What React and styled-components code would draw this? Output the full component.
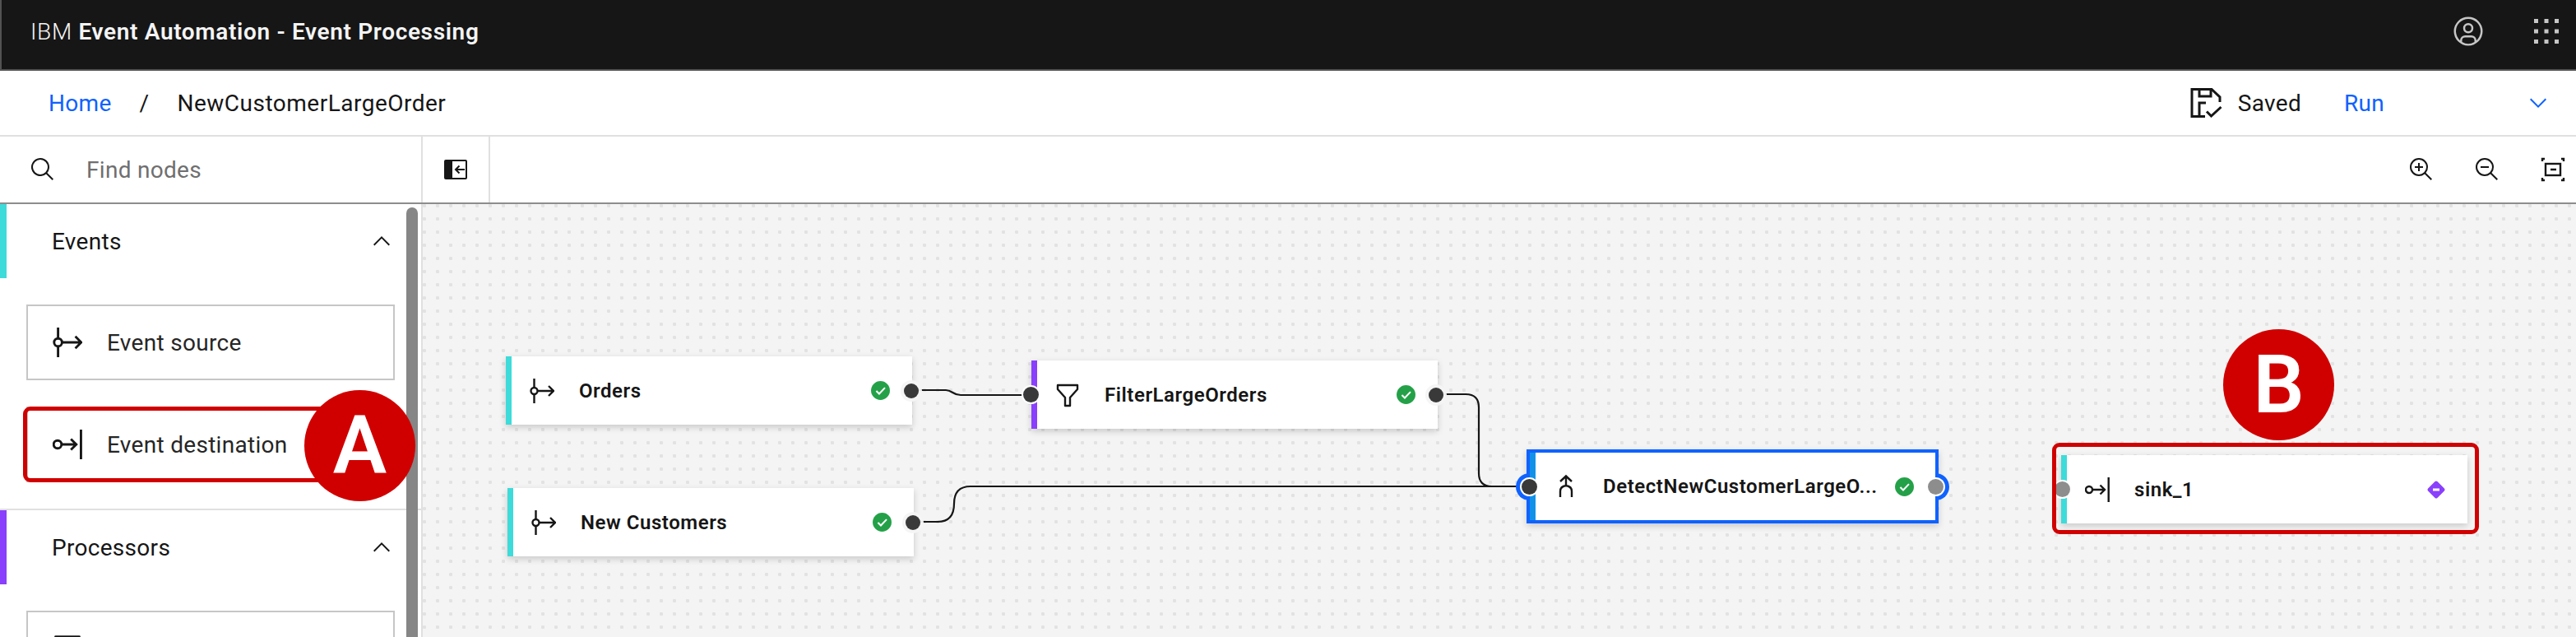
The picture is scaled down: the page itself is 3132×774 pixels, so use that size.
import React from "react";
import styled, { createGlobalStyle } from "styled-components";

const GlobalStyle = createGlobalStyle`
    * { box-sizing: border-box; }
    html, body { margin: 0; padding: 0; background: #fff; }
    body {
        font-family: Roboto, "Liberation Sans", sans-serif;
        color: #161616;
        overflow: hidden;
    }
`;

const Page = styled.div`
    position: relative;
    width: 3132px;
    height: 774px;
    display: flex;
    flex-direction: column;
    overflow: hidden;
`;

const Header = styled.header`
    flex: 0 0 86px;
    display: flex;
    align-items: center;
    justify-content: space-between;
    padding: 0 21px 8px 35px;
    background: #161616;
    border-left: 2px solid #525252;
    border-bottom: 2px solid #525252;
    color: #f4f4f4;
`;

const Title = styled.div`
    font-size: 28px;
    font-weight: 600;
    letter-spacing: 0.65px;
    span { font-weight: 300; }
`;

const HeaderIcons = styled.div`
    display: flex;
    align-items: center;
    gap: 60px;
    color: #c6c6c6;
`;

const BreadcrumbBar = styled.nav`
    flex: 0 0 80px;
    display: flex;
    align-items: center;
    justify-content: space-between;
    padding: 0 30px 0 59px;
    border-bottom: 2px solid #e0e0e0;
    font-size: 28px;
    letter-spacing: 0.3px;
`;

const Crumbs = styled.div`
    display: flex;
    align-items: center;
`;

const HomeLink = styled.a`
    color: #0f62fe;
`;

const Slash = styled.span`
    margin: 0 34px;
`;

const FlowName = styled.span`
    letter-spacing: 0.5px;
`;

const SaveState = styled.div`
    display: flex;
    align-items: center;
    gap: 19px;
`;

const RunButton = styled.div`
    display: flex;
    align-items: center;
    justify-content: space-between;
    width: 252px;
    margin-left: 52px;
    color: #0f62fe;
`;

const RightGroup = styled.div`
    display: flex;
    align-items: center;
`;

const Toolbar = styled.div`
    flex: 0 0 82px;
    display: flex;
    align-items: center;
    border-bottom: 2px solid #8d8d8d;
`;

const SearchBox = styled.div`
    width: 514px;
    height: 100%;
    display: flex;
    align-items: center;
    gap: 37px;
    padding-left: 36px;
    border-right: 2px solid #e0e0e0;
    font-size: 28px;
    letter-spacing: 0.3px;
    color: #6f6f6f;
    svg { color: #161616; }
`;

const ToolCell = styled.div`
    width: 82px;
    height: 100%;
    display: flex;
    align-items: center;
    justify-content: center;
    border-right: 2px solid #e0e0e0;
`;

const ZoomTools = styled.div`
    margin-left: auto;
    display: flex;
    align-items: center;
    gap: 48px;
    padding-right: 12px;
`;

const Body = styled.div`
    flex: 1;
    display: flex;
    min-height: 0;
`;

const Sidebar = styled.aside`
    position: relative;
    flex: 0 0 514px;
    border-right: 2px solid #e0e0e0;
    overflow: hidden;
`;

const Thumb = styled.div`
    position: absolute;
    top: 4px;
    bottom: -20px;
    left: 494px;
    width: 14px;
    border-radius: 7px;
    background: #868686;
`;

const Section = styled.section`
    border-bottom: 2px solid #e0e0e0;
    &:last-of-type { border-bottom: none; }
`;

const SectionHeader = styled.div`
    height: 90px;
    display: flex;
    align-items: center;
    justify-content: space-between;
    padding: 0 32px 0 55px;
    border-left: 8px solid ${(p) => p.$color};
    font-size: 28px;
    letter-spacing: 0.3px;
`;

const CardList = styled.div`
    display: flex;
    flex-direction: column;
    gap: 32px;
    padding: 32px;
`;

const Card = styled.div`
    height: 92px;
    display: flex;
    align-items: center;
    gap: 30px;
    padding-left: 30px;
    border: 2px solid #c6c6c6;
    background: #fff;
    font-size: 28px;
    letter-spacing: 0.3px;
    color: #262626;
`;

const Canvas = styled.main`
    position: relative;
    flex: 1;
    overflow: hidden;
    background-color: #f4f4f4;
    background-image: radial-gradient(circle at 8px 8px, #e2e2e2 2px, transparent 2.4px);
    background-size: 16px 16px;
    background-position: 10px 10px;
`;

const Wires = styled.svg`
    position: absolute;
    inset: 0;
    width: 100%;
    height: 100%;
`;

const Node = styled.div`
    position: absolute;
    isolation: isolate;
    left: ${(p) => p.$x}px;
    top: ${(p) => p.$y}px;
    width: ${(p) => (p.$selected ? 501 : 494)}px;
    height: ${(p) => (p.$selected ? 90 : 83)}px;
    display: flex;
    align-items: center;
    padding: 0 ${(p) => (p.$selected ? 24 : 25)}px 0 29px;
    background: #fff;
    border: ${(p) => (p.$selected ? "4px solid #0f62fe" : "none")};
    box-shadow: 0 3px 8px rgba(0, 0, 0, 0.18);
    &::before {
        content: "";
        position: absolute;
        left: 0;
        top: 0;
        bottom: 0;
        width: 7px;
        background: ${(p) => p.$color};
    }
`;

const NodeIcon = styled.div`
    flex: 0 0 60px;
    display: flex;
    align-items: center;
`;

const NodeLabel = styled.div`
    flex: 1;
    font-size: 24px;
    font-weight: 600;
    letter-spacing: 0.55px;
    white-space: nowrap;
    color: #161616;
`;

const Port = styled.span`
    position: absolute;
    top: 50%;
    width: ${(p) => (p.$thin ? 19 : 18)}px;
    height: ${(p) => (p.$thin ? 19 : 18)}px;
    margin-top: ${(p) => (p.$thin ? -9.5 : -9)}px;
    border-radius: 50%;
    background: ${(p) => (p.$idle ? "#8d8d8d" : "#393939")};
    box-shadow: 0 0 0 ${(p) => (p.$thin ? "2px #fff" : "4px rgba(244, 244, 244, 0.95)")};
    ${(p) => (p.$side === "in" ? `left: ${p.$at}px;` : `right: ${p.$at}px;`)}
    &::before {
        content: ${(p) => (p.$bump ? '""' : "none")};
        position: absolute;
        inset: -7px;
        z-index: -1;
        border-radius: 50%;
        background: #0f62fe;
        clip-path: ${(p) => (p.$side === "in" ? "inset(0 60% 0 0)" : "inset(0 0 0 60%)")};
    }
`;

const Highlight = styled.div`
    position: absolute;
    left: ${(p) => p.$x}px;
    top: ${(p) => p.$y}px;
    width: ${(p) => p.$w}px;
    height: ${(p) => p.$h}px;
    border: 5px solid #d00000;
    border-radius: 9px;
`;

const Badge = styled.div`
    position: absolute;
    left: ${(p) => p.$x}px;
    top: ${(p) => p.$y}px;
    width: 135px;
    height: 135px;
    display: flex;
    align-items: center;
    justify-content: center;
    border-radius: 50%;
    background: #d00000;
    color: #fff;
    font-size: 98px;
    font-weight: 600;
    line-height: 1;
`;

const Icon = ({ size = 32, view = "0 0 32 32", children, ...rest }) => (
    <svg width={size} height={size} viewBox={view} fill="currentColor" {...rest}>
        {children}
    </svg>
);

const Line = styled.svg`
    fill: none;
    stroke: #161616;
    stroke-width: ${(p) => p.$weight || 2.4};
    flex-shrink: 0;
`;

const SourceIcon = ({ size = 30 }) => (
    <Line width={size} height={size} viewBox="0 0 30 30">
        <path d="M5.5 0V11M5.5 19V30M9.5 15H29M23 9l6 6-6 6" />
        <circle cx="5.5" cy="15" r="4" />
    </Line>
);

const DestinationIcon = ({ size = 30 }) => (
    <Line width={size} height={size} viewBox="0 0 30 30">
        <circle cx="5" cy="15" r="4" />
        <path d="M9 15H24M18.5 9.5L24 15l-5.5 5.5M28.7 0V30" />
    </Line>
);

const FilterIcon = ({ size = 30 }) => (
    <Line width={size} height={size} viewBox="0 0 30 30" strokeLinejoin="round">
        <path d="M3 3H27V8L18 18V28H12V18L3 8Z" />
    </Line>
);

const MergeIcon = () => (
    <Line width="30" height="30" viewBox="0 0 30 30">
        <path d="M8 9L15 2.5 22 9M15 3V15M8 28V21Q8 15 15 14Q22 15 22 21V28" />
    </Line>
);

const CheckIcon = () => (
    <Icon size={27} view="0 0 32 32" style={{ color: "#24a148", flexShrink: 0 }}>
        <circle cx="16" cy="16" r="13.6" />
        <path d="M10 16.5l4.2 4.2L22.5 12" fill="none" stroke="#fff" strokeWidth="2.4" />
    </Icon>
);

const DiamondIcon = () => (
    <svg width="26" height="26" viewBox="0 0 26 26" style={{ flexShrink: 0 }}>
        <rect x="5" y="5" width="16" height="16" rx="2" fill="#8a3ffc" transform="rotate(45 13 13)" />
        <rect x="9" y="11.5" width="8" height="3" fill="#fff" />
    </svg>
);

const SearchIcon = () => (
    <Icon>
        <path d="M29,27.5859l-7.5521-7.5521a11.0177,11.0177,0,1,0-1.4141,1.4141L27.5859,29ZM4,13a9,9,0,1,1,9,9A9.01,9.01,0,0,1,4,13Z" />
    </Icon>
);

const Magnifier = "M21.4479,20A10.856,10.856,0,0,0,24,13,11,11,0,1,0,13,24a10.856,10.856,0,0,0,7-2.5521L27.5859,29,29,27.5859ZM13,22a9,9,0,1,1,9-9A9.01,9.01,0,0,1,13,22Z";

const ZoomInIcon = () => (
    <Icon>
        <path d="M18 12L14 12 14 8 12 8 12 12 8 12 8 14 12 14 12 18 14 18 14 14 18 14 18 12z" />
        <path d={Magnifier} />
    </Icon>
);

const ZoomOutIcon = () => (
    <Icon>
        <path d="M8 12H18V14H8z" />
        <path d={Magnifier} />
    </Icon>
);

const FitIcon = () => (
    <Line width="32" height="32" viewBox="0 0 32 32">
        <path d="M3 6V3H6M26 3H29V6M3 26V29H6M26 29H29V26M13 16H20" />
        <rect x="7" y="9" width="18" height="14" />
    </Line>
);

const ChevronUp = () => (
    <Icon>
        <path d="M16 10L26 20l-1.4 1.4-8.6-8.6-8.6 8.6L6 20z" />
    </Icon>
);

const ChevronDown = () => (
    <Icon>
        <path d="M16 22L6 12l1.4-1.4 8.6 8.6 8.6-8.6L26 12z" />
    </Icon>
);

const CollapseIcon = () => (
    <svg width="28" height="24" viewBox="0 0 28 24">
        <rect x="0" y="0" width="28" height="24" rx="2" fill="#161616" />
        <rect x="10" y="2" width="16" height="20" fill="#fff" />
        <path d="M25 12H14M18.5 7.5L14 12l4.5 4.5" fill="none" stroke="#161616" strokeWidth="2" />
    </svg>
);

const SaveIcon = () => (
    <Line width="39" height="36" viewBox="0 0 39 36" $weight={3}>
        <path d="M18 34.5H2V1.5H26L36 11V17M11 34V18H19M11 2V10H25V2M20 28.5L25.5 34 37.5 23" />
    </Line>
);

const UserIcon = () => (
    <Icon size={40}>
        <path d="M16 8a5 5 0 1 0 5 5A5 5 0 0 0 16 8Zm0 8a3 3 0 1 1 3-3A3.0034 3.0034 0 0 1 16 16Z" />
        <path d="M16 2A14 14 0 1 0 30 16 14.0158 14.0158 0 0 0 16 2ZM10 26.3765V25a3.0033 3.0033 0 0 1 3-3h6a3.0033 3.0033 0 0 1 3 3v1.3765a11.8989 11.8989 0 0 1-12 0Zm13.9925-1.4507A5.0016 5.0016 0 0 0 19 20H13a5.0016 5.0016 0 0 0-4.9925 4.9258 12 12 0 1 1 15.985 0Z" />
    </Icon>
);

const AppsIcon = () => (
    <Icon size={30} view="0 0 30 30">
        {[0, 12.5, 25].flatMap((y) =>
            [0, 12.5, 25].map((x) => <rect key={`${x}-${y}`} x={x} y={y} width="5" height="5" />)
        )}
    </Icon>
);

const App = () => {
    return (
        <Page>
            <GlobalStyle />
            <Header>
                <Title>
                    <span>IBM</span> Event Automation - Event Processing
                </Title>
                <HeaderIcons>
                    <UserIcon />
                    <AppsIcon />
                </HeaderIcons>
            </Header>
            <BreadcrumbBar>
                <Crumbs>
                    <HomeLink>Home</HomeLink>
                    <Slash>/</Slash>
                    <FlowName>NewCustomerLargeOrder</FlowName>
                </Crumbs>
                <RightGroup>
                    <SaveState>
                        <SaveIcon />
                        <span>Saved</span>
                    </SaveState>
                    <RunButton>
                        <span>Run</span>
                        <ChevronDown />
                    </RunButton>
                </RightGroup>
            </BreadcrumbBar>
            <Toolbar>
                <SearchBox>
                    <SearchIcon />
                    <span>Find nodes</span>
                </SearchBox>
                <ToolCell>
                    <CollapseIcon />
                </ToolCell>
                <ZoomTools>
                    <ZoomInIcon />
                    <ZoomOutIcon />
                    <FitIcon />
                </ZoomTools>
            </Toolbar>
            <Body>
                <Sidebar>
                    <Section>
                        <SectionHeader $color="#3ddbd9">
                            <span>Events</span>
                            <ChevronUp />
                        </SectionHeader>
                        <CardList>
                            <Card>
                                <SourceIcon size={36} />
                                <span>Event source</span>
                            </Card>
                            <Card>
                                <DestinationIcon size={36} />
                                <span>Event destination</span>
                            </Card>
                        </CardList>
                    </Section>
                    <Section>
                        <SectionHeader $color="#8a3ffc">
                            <span>Processors</span>
                            <ChevronUp />
                        </SectionHeader>
                        <CardList>
                            <Card>
                                <FilterIcon size={36} />
                            </Card>
                        </CardList>
                    </Section>
                    <Thumb />
                </Sidebar>
                <Canvas>
                    <Wires viewBox="514 248 2618 526" fill="none" stroke="#161616" strokeWidth="2.2">
                        <path d="M1116 474H1150C1158 474 1158 480 1168 480H1246" />
                        <path d="M1756 479H1782Q1798 479 1798 495V575Q1798 591 1814 591H1850" />
                        <path d="M1118 634H1140Q1160 634 1160 612Q1160 591 1180 591H1850" />
                    </Wires>
                    <Node $x={101} $y={185} $color="#3ddbd9">
                        <NodeIcon><SourceIcon /></NodeIcon>
                        <NodeLabel>Orders</NodeLabel>
                        <CheckIcon />
                        <Port $side="out" $at={-8} />
                    </Node>
                    <Node $x={103} $y={345} $color="#3ddbd9">
                        <NodeIcon><SourceIcon /></NodeIcon>
                        <NodeLabel>New Customers</NodeLabel>
                        <CheckIcon />
                        <Port $side="out" $at={-8} />
                    </Node>
                    <Node $x={740} $y={190} $color="#8a3ffc">
                        <Port $side="in" $at={-10} $thin />
                        <NodeIcon><FilterIcon /></NodeIcon>
                        <NodeLabel>FilterLargeOrders</NodeLabel>
                        <CheckIcon />
                        <Port $side="out" $at={-7} />
                    </Node>
                    <Node $x={1342} $y={298} $color="#1192e8" $selected>
                        <Port $side="in" $at={-10} $thin $bump />
                        <NodeIcon><MergeIcon /></NodeIcon>
                        <NodeLabel>DetectNewCustomerLargeO...</NodeLabel>
                        <CheckIcon />
                        <Port $side="out" $at={-10} $idle $thin $bump />
                    </Node>
                    <Node $x={1992} $y={305} $color="#3ddbd9">
                        <Port $side="in" $at={-8} $idle $thin />
                        <NodeIcon><DestinationIcon /></NodeIcon>
                        <NodeLabel>sink_1</NodeLabel>
                        <DiamondIcon />
                    </Node>
                </Canvas>
            </Body>
            <Highlight $x={28} $y={494} $w={420} $h={92} />
            <Badge $x={370} $y={474}>A</Badge>
            <Highlight $x={2495} $y={538} $w={519} $h={111} />
            <Badge $x={2703} $y={400}>B</Badge>
        </Page>
    );
};

export default App;
